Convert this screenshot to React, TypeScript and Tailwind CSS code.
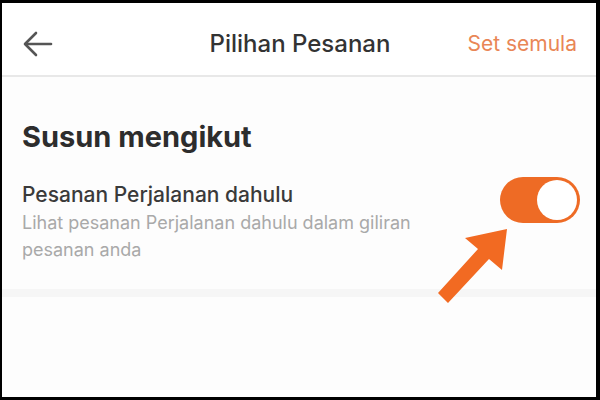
import React, { useState } from 'react';

const BackArrow: React.FC = () => (
  <svg width="30" height="26" viewBox="0 0 30 26" fill="none" stroke="#555" strokeWidth="2.6" strokeLinecap="round" strokeLinejoin="round">
    <path d="M28 13H3" />
    <path d="M13 2L2 13l11 11" />
  </svg>
);

const Toggle: React.FC<{ on: boolean; onChange: () => void }> = ({ on, onChange }) => (
  <button
    type="button"
    onClick={onChange}
    className={`flex h-[46px] w-[80px] shrink-0 items-center rounded-full p-[3px] ${on ? 'justify-end bg-[#ee6b25]' : 'justify-start bg-gray-300'}`}
  >
    <span className="block h-[40px] w-[40px] rounded-full bg-white" />
  </button>
);

export default function App() {
  const [travelFirst, setTravelFirst] = useState(true);

  return (
    <div className="relative h-[400px] w-[600px] overflow-hidden bg-black pb-[3px] pl-[2px] pr-[4px] pt-[3px]" style={{ fontFamily: 'Inter, "Liberation Sans", Arial, sans-serif' }}>
      <div className="flex h-full flex-col bg-[#fdfdfd]">
        <header className="grid h-[74px] grid-cols-[1fr_auto_1fr] items-center border-b-2 border-[#e8e8e8] bg-white pl-[21px] pr-[19px] pt-[10px]">
          <div className="justify-self-start">
            <BackArrow />
          </div>
          <h1 className="text-[24px] font-medium text-[#333]">Pilihan Pesanan</h1>
          <button type="button" className="justify-self-end text-[21px] text-[#e98656]">Set semula</button>
        </header>

        <section className="h-[212px] bg-[#fdfdfd] pl-[20px] pr-[16px] pt-[42px]">
          <h2 className="text-[29px] font-bold leading-[36px] text-[#2d2d2d]">Susun mengikut</h2>
          <div className="mt-[27px] flex items-start justify-between">
            <div>
              <p className="text-[21px] font-medium leading-[26px] text-[#3a3a3a]">Pesanan Perjalanan dahulu</p>
              <p className="mt-[1px] w-[420px] text-[18px] leading-[27px] text-[#a9a9a9]">
                Lihat pesanan Perjalanan dahulu dalam giliran pesanan anda
              </p>
            </div>
            <div className="mt-[-5px]">
              <Toggle on={travelFirst} onChange={() => setTravelFirst(!travelFirst)} />
            </div>
          </div>
        </section>

        <div className="h-[8px] bg-[#f6f6f6]" />
        <div className="flex-1 bg-[#fdfdfd]" />
      </div>

      {/* callout arrow pointing at the switch */}
      <svg className="pointer-events-none absolute left-0 top-0" width="600" height="400" viewBox="0 0 600 400">
        <polygon points="507,229 465,238 478,249 438,293 448,303 489,259 502,270" fill="#f26a22" />
      </svg>
    </div>
  );
}
